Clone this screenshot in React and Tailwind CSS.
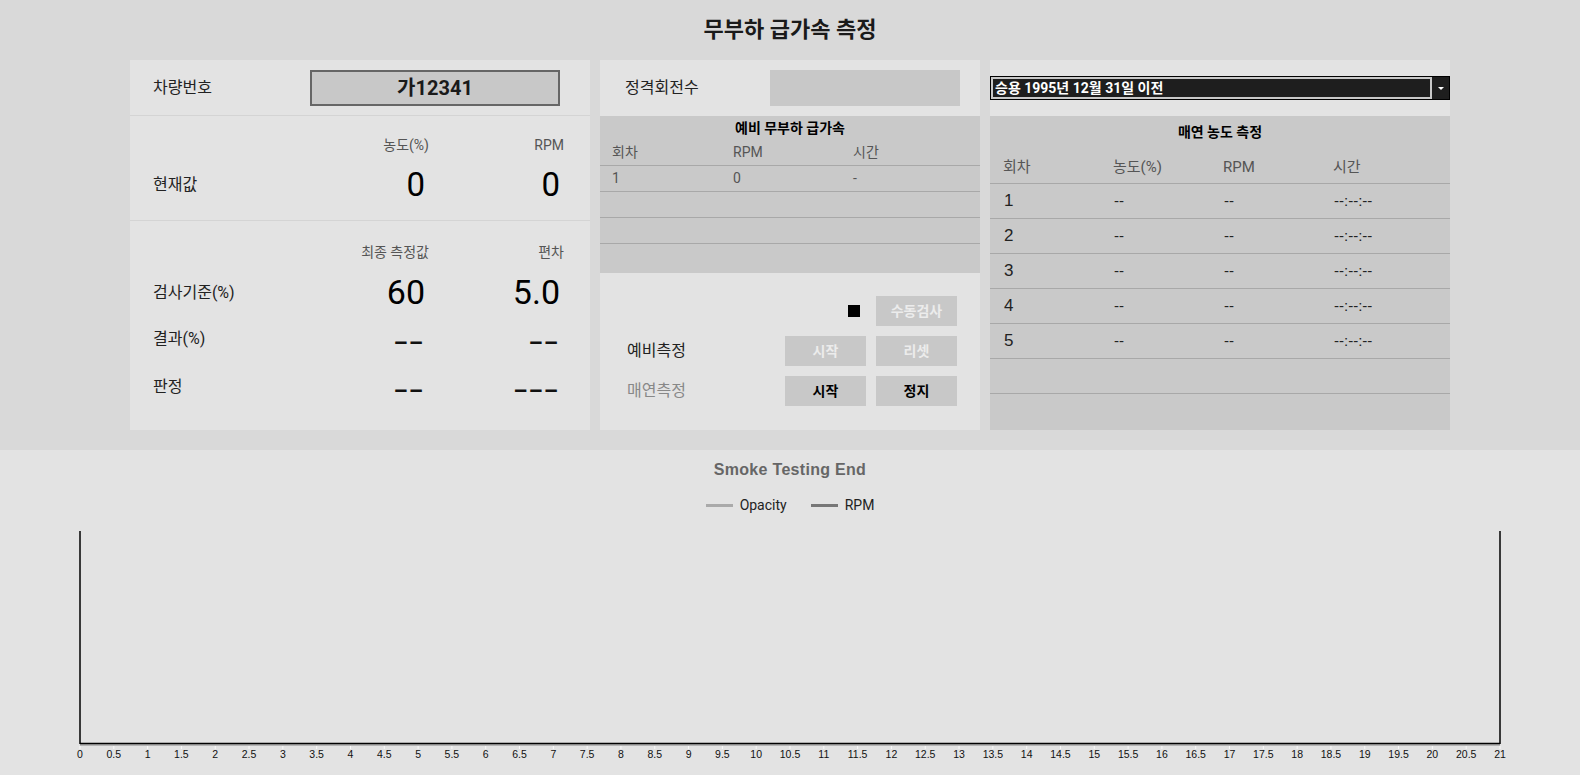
import React from 'react';

const KR = "font-['Roboto','Noto_Sans_CJK_KR',sans-serif]";
const ARIAL = "font-['Liberation_Sans','Noto_Sans_CJK_KR',sans-serif]";

const ticks = Array.from({ length: 43 }, (_, i) => i * 0.5);

function Chart() {
  const x0 = 80;
  const x1 = 1500;
  const top = 16;
  const bottom = 229;
  const step = (x1 - x0) / 42;
  return (
    <svg width="1580" height="260" className="block">
      <line x1={x0} y1={top} x2={x0} y2={bottom} stroke="#000" strokeWidth="1.5" />
      <line x1={x1} y1={top} x2={x1} y2={bottom} stroke="#000" strokeWidth="1.5" />
      <line x1={x0} y1={bottom + 1} x2={x1} y2={bottom + 1} stroke="#b4b4b4" strokeWidth="2" />
      <line x1={x0} y1={bottom - 0.5} x2={x1} y2={bottom - 0.5} stroke="#000" strokeWidth="1.5" />
      {ticks.map((t, i) => (
        <g key={t}>
          <line x1={x0 + i * step} y1={bottom + 2} x2={x0 + i * step} y2={bottom + 5} stroke="#fafafa" strokeWidth="1" />
          <text
            x={x0 + i * step}
            y={bottom + 14}
            textAnchor="middle"
            fontSize="10.5"
            fill="#111"
            fontFamily="'Liberation Sans', sans-serif"
          >
            {t}
          </text>
        </g>
      ))}
    </svg>
  );
}

function Btn({ children, tone }) {
  const cls = tone === 'off' ? 'text-[#ececec] font-bold' : 'text-black font-bold';
  return (
    <div className={`w-[81px] h-[30px] bg-[#c8c8c8] flex items-center justify-center text-[14px] ${cls}`}>
      {children}
    </div>
  );
}

// 긴 대시 표시 (결과/판정 빈 값)
function Dash({ n }) {
  return (
    <span className={`text-right text-[23px] font-bold text-[#111] pr-[4px] pt-[4px] tracking-[2.5px] ${ARIAL}`}>
      {'–'.repeat(n)}
    </span>
  );
}

export default function App() {
  const smoke = [1, 2, 3, 4, 5];
  return (
    <div className={`w-[1580px] h-[775px] bg-[#e3e3e3] ${KR} overflow-hidden`}>
      {/* 상단 영역 */}
      <div className="bg-[#d9d9d9] h-[450px]">
        <div className="h-[60px] flex items-center justify-center pb-[2px]">
          <h1 className="text-[22px] font-bold text-[#1a1a1a]">무부하 급가속 측정</h1>
        </div>

        <div className="w-[1320px] mx-auto flex gap-[10px] h-[370px]">
          {/* 왼쪽 패널 */}
          <div className="w-[460px] bg-[#e3e3e3] flex flex-col">
            <div className="h-[56px] border-b border-[#d4d4d4] flex items-center pl-[23px] pr-[30px]">
              <span className="text-[16px] text-[#222]">차량번호</span>
              <div className="ml-auto w-[250px] h-[36px] border-2 border-[#666] bg-[#c8c8c8] flex items-center justify-center text-[20px] font-bold text-[#1a1a1a]">
                가12341
              </div>
            </div>

            <div className="h-[105px] border-b border-[#d4d4d4] pl-[23px] pr-[26px] pt-[19px]">
              <div className="grid grid-cols-[1fr_135px_135px] h-[20px] items-center text-[14px] text-[#555]">
                <span />
                <span className="text-right">농도(%)</span>
                <span className="text-right">RPM</span>
              </div>
              <div className="grid grid-cols-[1fr_135px_135px] h-[40px] mt-[5px] items-center">
                <span className="text-[16px] text-[#222]">현재값</span>
                <span className="text-right text-[33px] text-black pr-[4px]">0</span>
                <span className="text-right text-[33px] text-black pr-[4px]">0</span>
              </div>
            </div>

            <div className="flex-1 pl-[23px] pr-[26px] pt-[21px]">
              <div className="grid grid-cols-[1fr_135px_135px] h-[20px] items-center text-[14px] text-[#555] mb-[5px]">
                <span />
                <span className="text-right">최종 측정값</span>
                <span className="text-right">편차</span>
              </div>
              <div className="grid grid-cols-[1fr_135px_135px] h-[48px] items-center">
                <span className="text-[16px] text-[#222]">검사기준(%)</span>
                <span className="text-right text-[34px] text-black pr-[4px]">60</span>
                <span className="text-right text-[34px] text-black pr-[4px]">5.0</span>
              </div>
              <div className="grid grid-cols-[1fr_135px_135px] h-[48px] items-center">
                <span className="text-[16px] text-[#222]">결과(%)</span>
                <Dash n={2} />
                <Dash n={2} />
              </div>
              <div className="grid grid-cols-[1fr_135px_135px] h-[48px] items-center">
                <span className="text-[16px] text-[#222]">판정</span>
                <Dash n={2} />
                <Dash n={3} />
              </div>
            </div>
          </div>

          {/* 가운데 패널 */}
          <div className="w-[380px] bg-[#e3e3e3] flex flex-col">
            <div className="h-[56px] flex items-center pl-[25px] pr-[20px]">
              <span className="text-[16px] text-[#222]">정격회전수</span>
              <div className="ml-auto w-[190px] h-[36px] bg-[#c8c8c8]" />
            </div>

            <div className="h-[157px] bg-[#c9c9c9] flex flex-col">
              <div className="h-[24px] flex items-center justify-center text-[14px] font-bold text-black">
                예비 무부하 급가속
              </div>
              <div className="h-[26px] border-b border-[#a8a8a8] grid grid-cols-[121px_120px_1fr] items-center pl-[12px] text-[14px] text-[#555]">
                <span>회차</span>
                <span>RPM</span>
                <span>시간</span>
              </div>
              <div className="h-[26px] border-b border-[#a8a8a8] grid grid-cols-[121px_120px_1fr] items-center pl-[12px] text-[14px] text-[#555]">
                <span>1</span>
                <span>0</span>
                <span>-</span>
              </div>
              <div className="h-[26px] border-b border-[#a8a8a8]" />
              <div className="h-[26px] border-b border-[#a8a8a8]" />
              <div className="flex-1" />
            </div>

            <div className="flex-1 pt-[23px] pl-[27px] pr-[23px] flex flex-col gap-[10px]">
              <div className="h-[30px] flex items-center justify-end gap-[16px]">
                <div className="w-[12px] h-[12px] bg-black" />
                <Btn tone="off">수동검사</Btn>
              </div>
              <div className="h-[30px] flex items-center gap-[10px]">
                <span className="text-[16px] text-[#222] mr-auto">예비측정</span>
                <Btn tone="off">시작</Btn>
                <Btn tone="off">리셋</Btn>
              </div>
              <div className="h-[30px] flex items-center gap-[10px]">
                <span className="text-[16px] text-[#888] mr-auto">매연측정</span>
                <Btn>시작</Btn>
                <Btn>정지</Btn>
              </div>
            </div>
          </div>

          {/* 오른쪽 패널 */}
          <div className="w-[460px] bg-[#e3e3e3] flex flex-col">
            <div className="h-[56px] flex items-center">
              <div className="w-full h-[24px] bg-[#1e1e1e] border border-black flex">
                <div className="flex-1 border-2 border-[#c8c8c8] flex items-center pl-[2px] text-[14px] font-bold text-white leading-none">
                  승용 1995년 12월 31일 이전
                </div>
                <div className="w-[17px] flex items-center justify-center">
                  <div className="w-0 h-0 border-l-[3px] border-r-[3px] border-t-[3px] border-l-transparent border-r-transparent border-t-white" />
                </div>
              </div>
            </div>

            <div className="flex-1 bg-[#c9c9c9] flex flex-col">
              <div className="h-[32px] flex items-center justify-center text-[14px] font-bold text-black pt-[1px]">
                매연 농도 측정
              </div>
              <div className="h-[36px] border-b border-[#a8a8a8] grid grid-cols-[110px_110px_110px_1fr] items-center pl-[13px] text-[15px] text-[#555] pt-[4px]">
                <span>회차</span>
                <span>농도(%)</span>
                <span>RPM</span>
                <span>시간</span>
              </div>
              {smoke.map((n) => (
                <div
                  key={n}
                  className={`h-[35px] border-b border-[#a8a8a8] grid grid-cols-[110px_110px_110px_1fr] items-center pl-[14px] text-[#222] ${ARIAL}`}
                >
                  <span className="text-[17px]">{n}</span>
                  <span className="text-[15px]">--</span>
                  <span className="text-[15px]">--</span>
                  <span className="text-[15px]">--:--:--</span>
                </div>
              ))}
              <div className="h-[35px] border-b border-[#a8a8a8]" />
              <div className="flex-1" />
            </div>
          </div>
        </div>
      </div>

      {/* 차트 영역 */}
      <div className="flex flex-col items-center">
        <div className={`h-[20px] mt-[10px] flex items-center text-[16px] font-bold text-[#666] tracking-[0.3px] ${ARIAL}`}>
          Smoke Testing End
        </div>
        <div className="h-[20px] mt-[15px] flex items-center gap-[14px] text-[14px] text-[#222]">
          <div className="flex items-center gap-[7px]">
            <div className="w-[27px] h-[3px] bg-[#aaa]" />
            <span>Opacity</span>
          </div>
          <div className="flex items-center gap-[7px] ml-[10px]">
            <div className="w-[27px] h-[3px] bg-[#777]" />
            <span>RPM</span>
          </div>
        </div>
        <Chart />
      </div>
    </div>
  );
}
